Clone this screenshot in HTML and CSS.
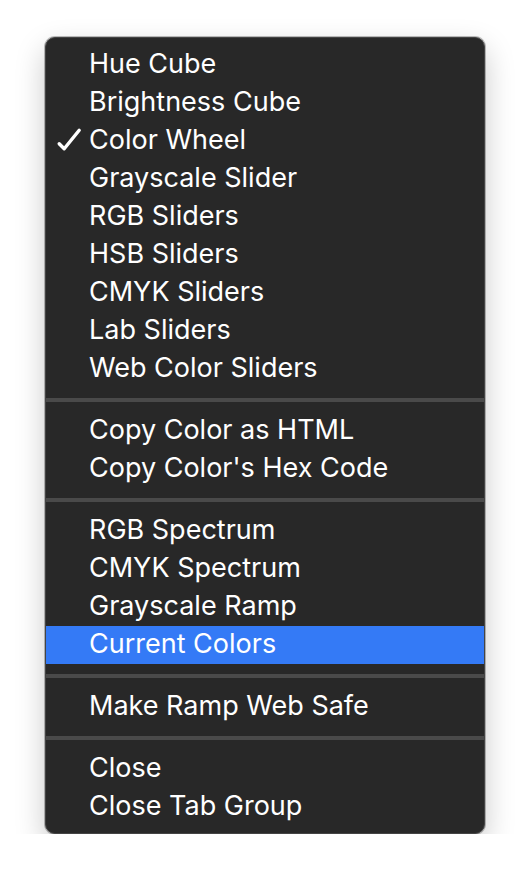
FILE: index.html
```html
<!DOCTYPE html>
<html>
<head>
<meta charset="utf-8">
<link rel="stylesheet" href="styles.css">
</head>
<body>
<div class="menu">
  <div class="item">Hue Cube</div>
  <div class="item">Brightness Cube</div>
  <div class="item checked"><svg class="check" viewBox="0 0 26 25" width="26" height="25"><path d="M3.2 16.8 L8.2 21.8 L23.2 3.2" fill="none" stroke="#fff" stroke-width="3.4" stroke-linecap="round" stroke-linejoin="round"/></svg>Color Wheel</div>
  <div class="item">Grayscale Slider</div>
  <div class="item">RGB Sliders</div>
  <div class="item">HSB Sliders</div>
  <div class="item">CMYK Sliders</div>
  <div class="item">Lab Sliders</div>
  <div class="item">Web Color Sliders</div>
  <div class="sep"></div>
  <div class="item">Copy Color as HTML</div>
  <div class="item">Copy Color's Hex Code</div>
  <div class="sep"></div>
  <div class="item">RGB Spectrum</div>
  <div class="item">CMYK Spectrum</div>
  <div class="item">Grayscale Ramp</div>
  <div class="item active">Current Colors</div>
  <div class="sep"></div>
  <div class="item">Make Ramp Web Safe</div>
  <div class="sep"></div>
  <div class="item">Close</div>
  <div class="item">Close Tab Group</div>
</div>
</body>
</html>
```
FILE: styles.css
```css
html, body {
  margin: 0;
  padding: 0;
  background: #ffffff;
}
body {
  padding: 37px 0 0 45px;
  font-family: Inter, "Liberation Sans", sans-serif;
}
.menu {
  width: 438px;
  background: #282828;
  border: 1px solid #444444;
  border-radius: 10px;
  padding: 8px 0 7px;
  display: flex;
  flex-direction: column;
  box-shadow: 0 0 0 1px rgba(0,0,0,0.25), 0 12px 30px rgba(0,0,0,0.22);
}
.item {
  position: relative;
  height: 38px;
  box-sizing: border-box;
  line-height: 36px;
  padding: 0 0 2px 43px;
  font-size: 27px;
  color: #ffffff;
  white-space: nowrap;
}
.item.active {
  background: #347af6;
}
.check {
  position: absolute;
  left: 10px;
  top: 5px;
}
.sep {
  height: 4px;
  margin: 10px 0;
  background: #4a4a4a;
}
```
